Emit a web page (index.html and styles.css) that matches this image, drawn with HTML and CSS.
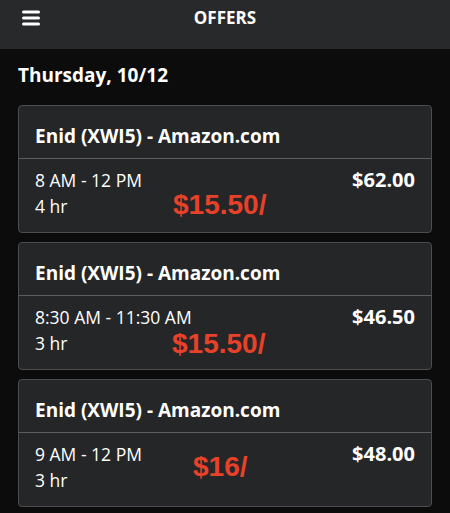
FILE: index.html
```html
<!DOCTYPE html>
<html>
<head>
<meta charset="utf-8">
<link rel="stylesheet" href="styles.css">
</head>
<body>
<header class="topbar">
  <svg class="menu" width="18" height="16" viewBox="0 0 18 16">
    <rect x="0" y="0.5" width="18" height="3" rx="1.5" fill="#fff"/>
    <rect x="0" y="6.5" width="18" height="3" rx="1.5" fill="#fff"/>
    <rect x="0" y="12.5" width="18" height="3" rx="1.5" fill="#fff"/>
  </svg>
  <div class="title">OFFERS</div>
</header>
<main class="content">
  <h2 class="day">Thursday, 10/12</h2>
  <div class="card">
    <div class="card-head">Enid (XWI5) - Amazon.com</div>
    <div class="card-body">
      <div class="times">
        <div>8 AM - 12 PM</div>
        <div>4 hr</div>
      </div>
      <div class="price">$62.00</div>
    </div>
    <div class="rate r1">$15.50/</div>
  </div>
  <div class="card">
    <div class="card-head">Enid (XWI5) - Amazon.com</div>
    <div class="card-body">
      <div class="times">
        <div>8:30 AM - 11:30 AM</div>
        <div>3 hr</div>
      </div>
      <div class="price">$46.50</div>
    </div>
    <div class="rate r2">$15.50/</div>
  </div>
  <div class="card">
    <div class="card-head">Enid (XWI5) - Amazon.com</div>
    <div class="card-body">
      <div class="times">
        <div>9 AM - 12 PM</div>
        <div>3 hr</div>
      </div>
      <div class="price">$48.00</div>
    </div>
    <div class="rate r3">$16/</div>
  </div>
</main>
</body>
</html>
```
FILE: styles.css
```css
html, body {
  margin: 0;
  padding: 0;
  background: #0c0c0c;
  color: #fff;
  font-family: "Open Sans", "Noto Sans", sans-serif;
}
.topbar {
  height: 49px;
  background: #28292b;
  position: relative;
  display: flex;
  align-items: flex-start;
  justify-content: center;
}
.menu {
  position: absolute;
  left: 22px;
  top: 10px;
}
.title {
  font-weight: 700;
  font-size: 17px;
  line-height: 20px;
  margin-top: 8px;
}
.content {
  padding: 0 18px;
}
.day {
  margin: 0;
  padding-top: 14px;
  font-size: 19px;
  font-weight: 700;
  line-height: 24px;
  height: 42px;
}
.card {
  position: relative;
  background: #252628;
  border: 1px solid #4b4d50;
  border-radius: 4px;
  height: 126px;
  margin-bottom: 9px;
  overflow: hidden;
}
.card-head {
  height: 53px;
  border-bottom: 1px solid #5b5f62;
  padding: 18px 16px 0 16px;
  font-size: 19px;
  font-weight: 700;
  line-height: 24px;
  box-sizing: border-box;
}
.card-body {
  display: flex;
  justify-content: space-between;
  padding: 8px 16px 0 16px;
}
.times {
  font-size: 17.5px;
  line-height: 26px;
}
.price {
  font-size: 20px;
  font-weight: 700;
  line-height: 26px;
}
.rate {
  position: absolute;
  color: #e8412a;
  font-family: "Liberation Sans", Arial, sans-serif;
  font-weight: 700;
  font-size: 28px;
  line-height: 32px;
}
.r1 { left: 154px; top: 83px; }
.r2 { left: 153px; top: 85px; }
.r3 { left: 174px; top: 71px; }
```
